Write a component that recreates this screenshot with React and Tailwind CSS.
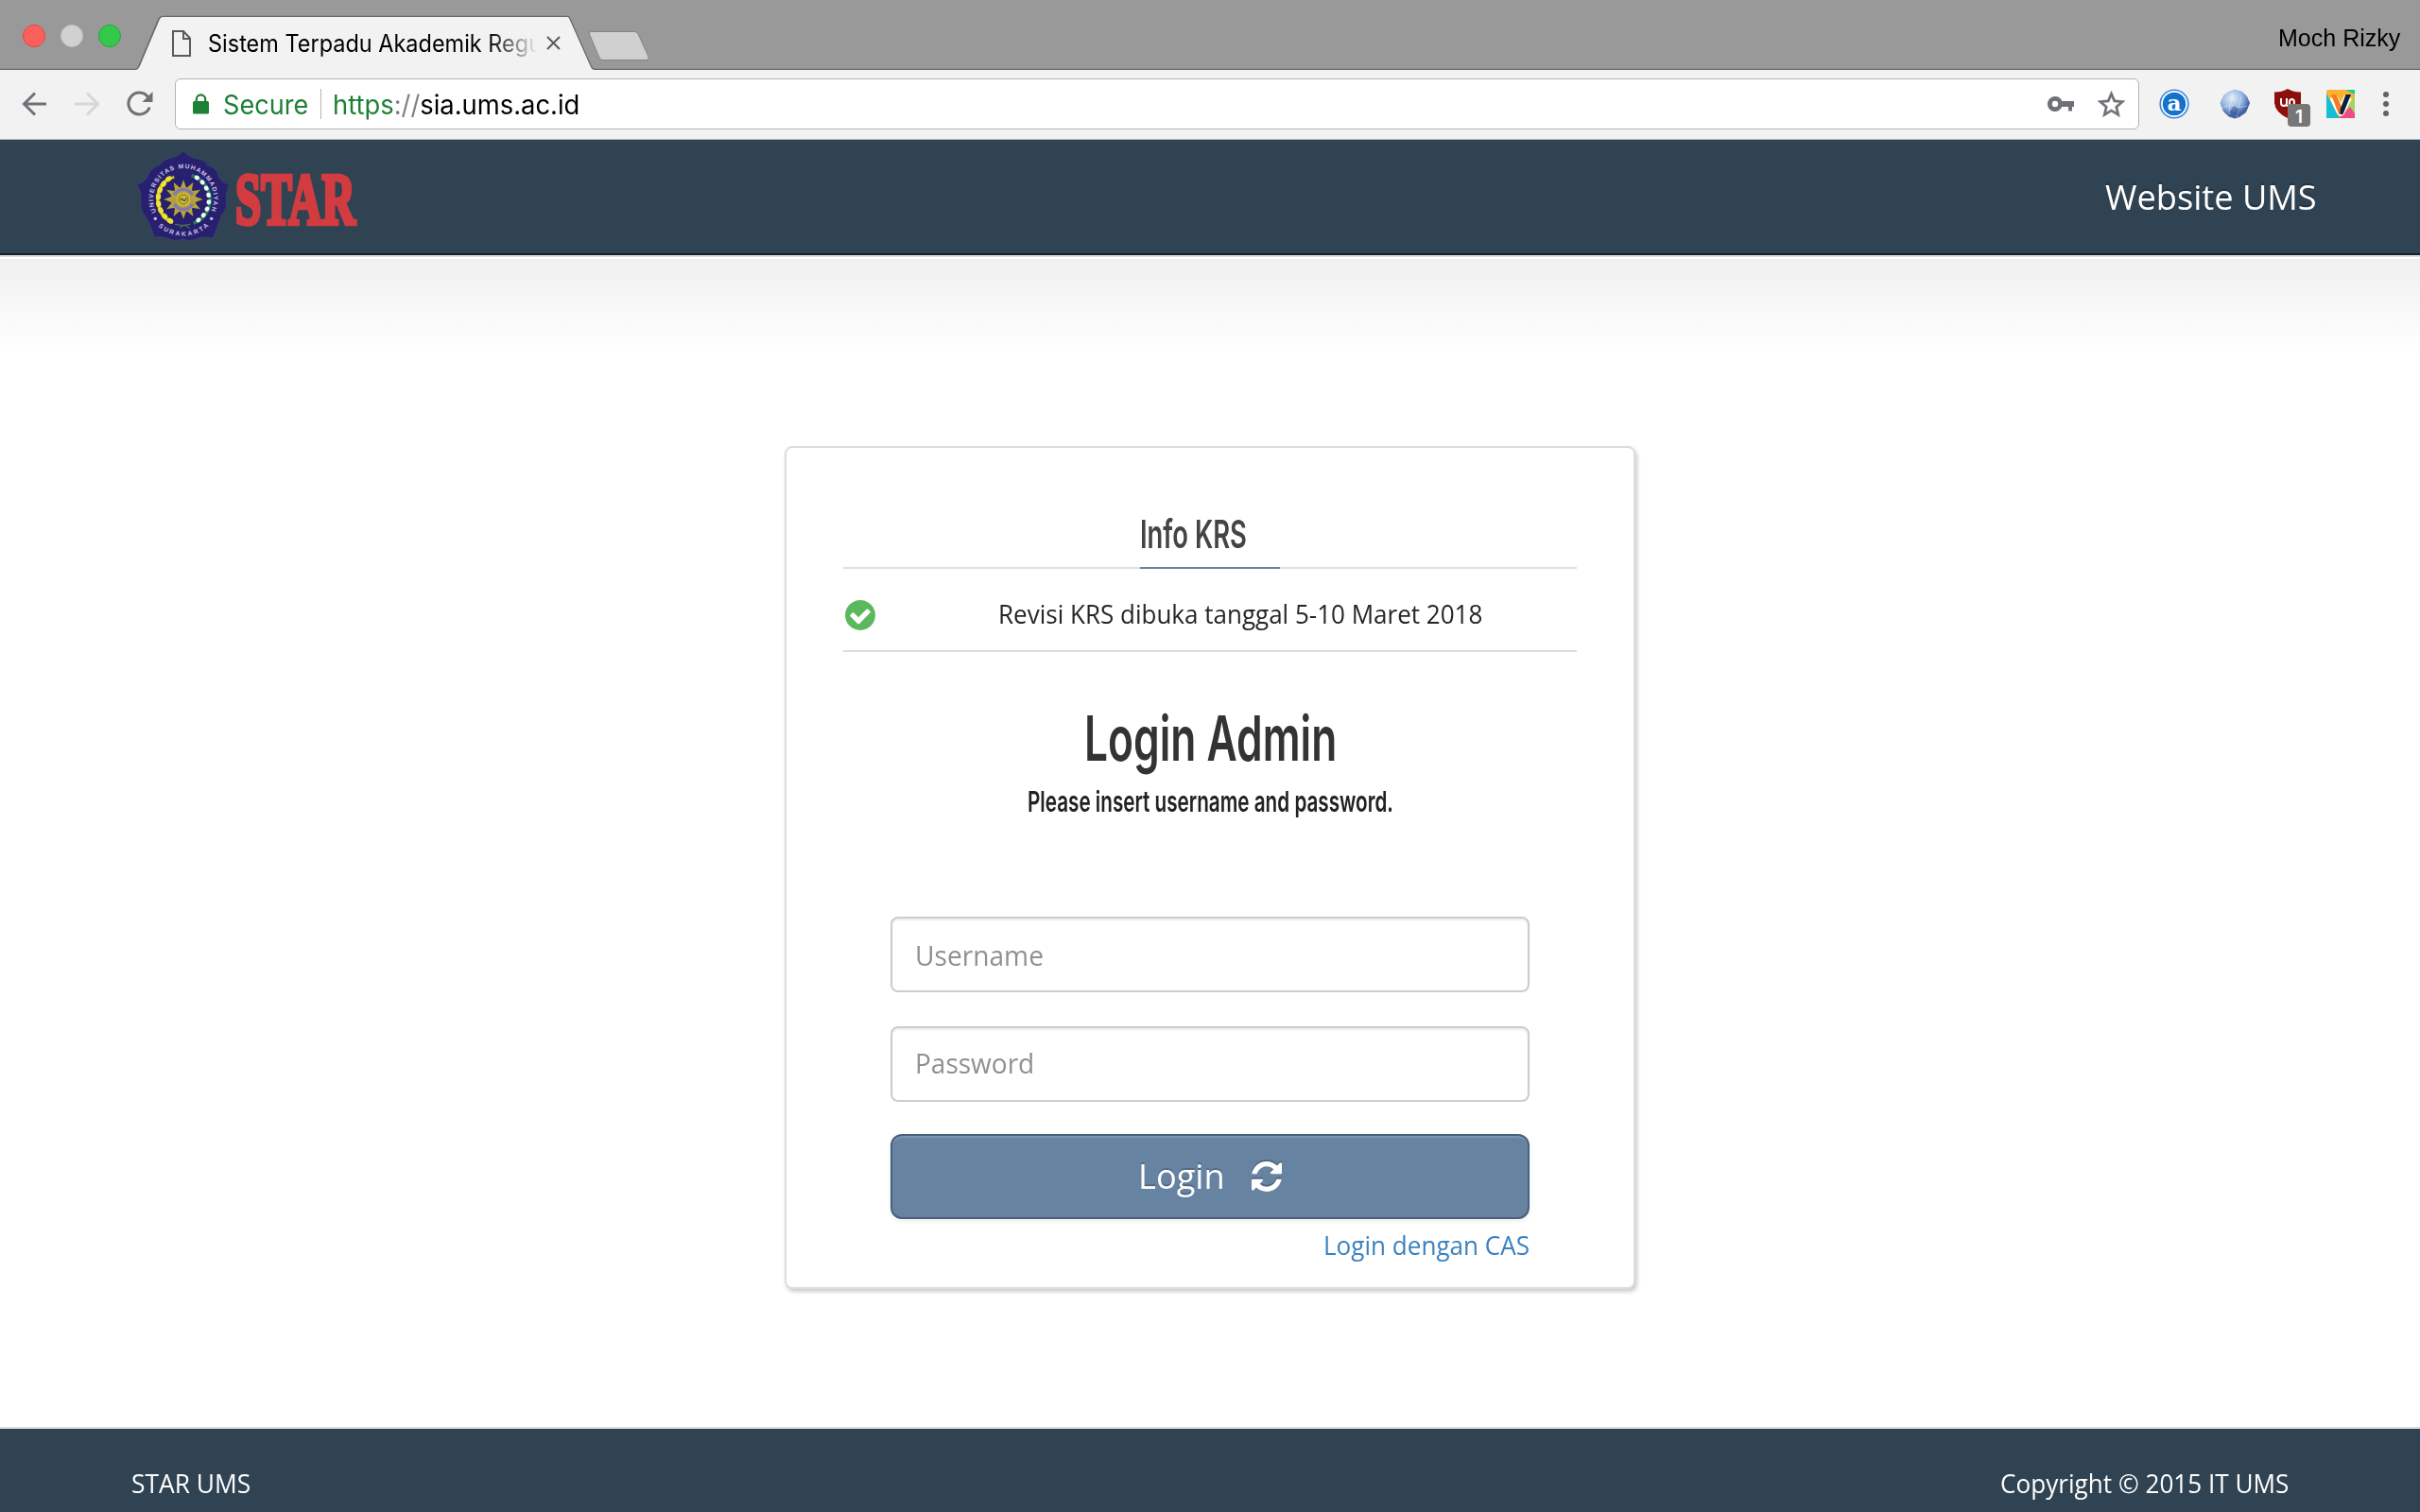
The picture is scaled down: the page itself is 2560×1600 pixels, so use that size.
import { useLayoutEffect, useRef, useState } from "react";

const OPEN = "font-['Open_Sans',sans-serif]";
const INTER = "font-['Inter',sans-serif]";

/* One line of text, condensed or widened to a given width. */
function Fit({ width, className = "", children }) {
  const ref = useRef(null);
  const [scale, setScale] = useState(1);
  useLayoutEffect(() => {
    setScale(width / ref.current.offsetWidth);
  }, [width]);
  return (
    <span className="block shrink-0" style={{ width }}>
      <span
        ref={ref}
        className={`inline-block origin-left whitespace-nowrap ${className}`}
        style={{ transform: `scaleX(${scale})` }}
      >
        {children}
      </span>
    </span>
  );
}

function TitleBar() {
  return (
    <div className="relative flex h-[74px] items-start bg-[#999999]">
      <svg className="absolute inset-0 h-[74px] w-full" viewBox="0 0 2560 74">
        <path d="M0 73.500H144Q146 73 147 70L168 20Q169.500 17.500 172 17.500H600Q602 17.500 603 20L625 70Q626 73 629 73.500H2560" fill="none" stroke="#686868" strokeWidth="1.500" />
        <path d="M144 74Q146.500 73.500 148 70L169 20.500Q170 18 172 18H600Q602 18 602.500 20.500L624.500 70Q626 74 629 74Z" fill="#f2f2f2" />
        <path d="M625 33.500H671Q674 33.500 675 36L686 60Q687 63.500 684 63.500H638Q635 63.500 634 61L623.500 36Q622.500 33.500 625 33.500Z" fill="#d0d0d0" stroke="#858585" />
      </svg>
      <div className="relative ml-6 mt-[26px] flex gap-4">
        <i className="size-6 rounded-full border border-[#e2463f] bg-[#fc605b]" />
        <i className="size-6 rounded-full border border-[#c0c0c0] bg-[#d1d1d1]" />
        <i className="size-6 rounded-full border border-[#24a935] bg-[#34c84a]" />
      </div>
      <div className="relative ml-[54px] mt-[25px] flex h-[41px] items-center">
        <svg className="h-[28px] w-5" viewBox="0 0 20 28" fill="none" stroke="#5a5a5a" strokeWidth="2">
          <path d="M1 1H12L19 8.500V27H1ZM12 1V9H19" />
        </svg>
        <div className="ml-[18px] [mask-image:linear-gradient(to_right,black_84%,transparent_99%)]">
          <Fit width={353} className={`${INTER} text-[25px] leading-[40px] text-black`}>Sistem Terpadu Akademik Regu</Fit>
        </div>
        <svg className="ml-[5px] size-[15px]" viewBox="0 0 15 15" stroke="#5a5a5a" strokeWidth="2">
          <path d="M1 1L14 14M14 1L1 14" />
        </svg>
      </div>
      <div className="relative ml-auto mr-[21px] mt-[20px]">
        <Fit width={129} className="font-['Liberation_Sans',sans-serif] text-[26px] leading-[40px] text-black">Moch Rizky</Fit>
      </div>
    </div>
  );
}

function Toolbar() {
  return (
    <div className="flex h-[74px] border-b border-[#b4b4b4] bg-[#f2f2f2] pt-[9px]">
      <div className="flex h-[54px] items-center pl-[23px]">
        <svg className="h-[26px] w-[27px]" viewBox="0 0 27 26" fill="none" stroke="#6e7175" strokeWidth="3">
          <path d="M26 13H3M14 1.500L2.500 13L14 24.500" />
        </svg>
        <svg className="ml-[29px] h-[26px] w-[27px]" viewBox="0 0 27 26" fill="none" stroke="#d6d6d6" strokeWidth="3">
          <path d="M0 13H24M13 1.500L24.500 13L13 24.500" />
        </svg>
        <svg className="ml-[28px] h-[28px] w-[28px]" viewBox="0 0 28 28" fill="none" stroke="#6e7175" strokeWidth="3">
          <path d="M24.200 17.500A11.500 11.500 0 1 1 22.500 6.500" />
          <path d="M27.500 1V12H16.500Z" fill="#6e7175" stroke="none" />
        </svg>
      </div>
      <div className="ml-[23px] flex h-[54px] w-[2078px] items-center rounded-[6px] border border-[#b4b4b4] bg-white pl-[18px] pr-[14px]">
        <svg className="h-[22px] w-[17px]" viewBox="0 0 17 22">
          <path d="M3.800 9V6A4.700 4.700 0 0 1 13.200 6V9" fill="none" stroke="#1e7e34" strokeWidth="2.200" />
          <rect y="8" width="17" height="13.500" rx="1.500" fill="#1e8037" />
        </svg>
        <div className="ml-[15px] flex items-center pt-[2px]">
          <Fit width={90} className={`${INTER} text-[28px] leading-[40px] text-[#1e8037]`}>Secure</Fit>
        </div>
        <i className="ml-[13px] h-8 w-px bg-[#b5b5b5]" />
        <div className="ml-[12px] flex pt-[2px]">
          <Fit width={261} className={`${INTER} text-[28px] leading-[40px] text-black`}>
            <span className="text-[#1e8037]">https</span>
            <span className="text-[#808080]">://</span>
            sia.ums.ac.id
          </Fit>
        </div>
        <svg className="ml-auto h-[16px] w-[28px]" viewBox="0 0 28 16" fill="#6e7175">
          <path fillRule="evenodd" d="M8 0A8 8 0 1 0 15.300 11H22V15.500H26V11H28V5H15.300A8 8 0 0 0 8 0ZM8 4.800A3.200 3.200 0 1 1 8 11.200A3.200 3.200 0 1 1 8 4.800Z" />
        </svg>
        <svg className="ml-[25px] h-[28px] w-[29px]" viewBox="2 2 20 19" fill="#6e7175" stroke="#6e7175" strokeWidth=".3">
          <path d="M22 9.240l-7.190-.62L12 2 9.190 8.630 2 9.240l5.460 4.730L5.820 21 12 17.270 18.180 21l-1.630-7.030L22 9.240zM12 15.400l-3.760 2.270 1-4.280-3.320-2.880 4.380-.38L12 6.100l1.710 4.040 4.380.38-3.320 2.880 1 4.280L12 15.400z" />
        </svg>
      </div>
      <div className="flex h-[54px] items-center pl-[21px]">
        <svg className="size-8" viewBox="0 0 32 32">
          <circle cx="16" cy="16" r="14.800" fill="#fff" stroke="#3b88d4" strokeWidth="1.600" />
          <circle cx="16" cy="16" r="12.200" fill="#1272cc" />
          <text x="16" y="23" textAnchor="middle" className="font-['DejaVu_Serif',serif] text-[23px] font-bold" fill="#fff">a</text>
        </svg>
        <svg className="ml-8 size-8" viewBox="0 0 32 32">
          <defs>
            <radialGradient id="globe" cx=".4" cy=".3" r=".75">
              <stop offset="0" stopColor="#e4effa" />
              <stop offset=".5" stopColor="#93b3dc" />
              <stop offset=".8" stopColor="#3c5fa3" />
              <stop offset="1" stopColor="#5f7199" />
            </radialGradient>
          </defs>
          <path d="M16 .5L24 3L29 8L32 15L28 25L21 30L16 31.500L10 29.500L4 24L.5 15L4 7L9 3Z" fill="url(#globe)" />
          <path d="M3 20L11 17L20 20L29 18M11 17L14 5M20 20L23 8M11 17L10 27M20 20L18 30" fill="none" stroke="#e8f1ff" strokeOpacity=".45" />
          <path d="M15 18L21 21L18 28L10 25Z" fill="#1f3f8a" fillOpacity=".45" />
        </svg>
        <div className="relative ml-[26px] h-[32px] w-[28px]">
          <svg className="h-[31px] w-[28px]" viewBox="0 0 28 31">
            <path d="M14 0Q20 3.500 28 3.500V15Q27 25 14 31Q1 25 0 15V3.500Q8 3.500 14 0Z" fill="#8d0f0b" />
            <path d="M7 10V15Q7 18 10 18Q13 18 13 15V10M13 18H14.500M16 22V13.500Q16 11 18.500 11Q21 11 21 14.500T18 18" fill="none" stroke="#fff" strokeWidth="2" />
          </svg>
          <span className="absolute left-[14px] top-[16px] flex h-6 w-6 items-center justify-center rounded-[4px] bg-[#777] pt-[2px] font-['Inter',sans-serif] text-[19px] font-semibold leading-none text-white">1</span>
        </div>
        <svg className="ml-[27px] size-[30px]" viewBox="0 0 30 30">
          <rect width="30" height="30" rx="2" fill="#fdb12b" />
          <path d="M0 4L14 30H0Z" fill="#15bfd0" />
          <path d="M20 0H30V5Z" fill="#12cfa0" />
          <path d="M30 5V23L20 20Z" fill="#a5d55f" />
          <path d="M13 30L25 18L30 25V30Z" fill="#ee4c86" />
          <path d="M7.500 7.500L15 23.500L23 7.500" fill="none" stroke="#fff" strokeWidth="8.500" strokeLinejoin="round" />
          <path d="M5 5H10.500L16 18V26H13Z" fill="#f77b22" />
          <path d="M20.500 5H26L17.500 26H14.500V21Z" fill="#0d2038" />
        </svg>
        <svg className="ml-[30px] h-[26px] w-[6px]" viewBox="0 0 6 26" fill="#5f6368">
          <circle cx="3" cy="3" r="3" />
          <circle cx="3" cy="13" r="3" />
          <circle cx="3" cy="23" r="3" />
        </svg>
      </div>
    </div>
  );
}

const RAYS = Array.from({ length: 12 }, (_, i) => i * 30);
const BEADS = [-58, -42, -26, -10, 6, 22, 38, 54];

function Logo() {
  return (
    <svg className="mb-[7px] h-[104px] w-[240px]" viewBox="30 36 720 312">
      <defs>
        <path id="ringTop" d="M106 250A96 96 0 1 1 278 250" />
        <path id="ringBottom" d="M105 288A118 118 0 0 0 279 288" />
      </defs>
      <path d="M192 55Q205 75 232 80Q262 85 268 102Q300 110 305 140Q315 158 338 163Q325 185 328 215Q332 240 312 262Q300 300 285 333Q255 325 235 335Q210 345 192 335Q170 345 145 335Q125 325 100 330Q92 300 72 265Q52 240 58 212Q60 185 45 163Q70 158 80 135Q90 108 118 100Q130 82 155 78Q182 72 192 55Z" fill="#28206f" stroke="#3d3f78" strokeWidth="2" />
      <g className="font-['Liberation_Sans',sans-serif] text-[20px] font-bold" fill="#c9c5e6">
        <text><textPath href="#ringTop" textLength="384" lengthAdjust="spacing">UNIVERSITAS MUHAMMADIYAH</textPath></text>
        <text><textPath href="#ringBottom" startOffset="10" textLength="176" lengthAdjust="spacing">SURAKARTA</textPath></text>
      </g>
      <circle cx="103" cy="271" r="5" fill="#c9c5e6" />
      <circle cx="281" cy="271" r="5" fill="#c9c5e6" />
      <path d="M163 139Q112 152 109 206Q111 265 158 284" fill="none" stroke="#c9b52c" strokeWidth="8" />
      <path d="M218 134Q272 152 278 210Q272 268 224 286" fill="none" stroke="#1d7f57" strokeWidth="10" />
      {BEADS.map((a) => (
        <g key={a}>
          <ellipse cx="112" cy="210" rx="8" ry="11" fill="#ede431" transform={`rotate(${a} 192 210)`} />
          <ellipse cx="273" cy="210" rx="7" ry="8" fill="#f2f7f5" transform={`rotate(${a} 192 210)`} />
        </g>
      ))}
      <path d="M165 289Q190 297 214 289M180 300L194 291L212 301" fill="none" stroke="#4c8a3f" strokeWidth="3" />
      {RAYS.map((a) => (
        <path key={a} d="M192 148L203 178H181Z" fill="#b9a635" transform={`rotate(${a} 192 210)`} />
      ))}
      <circle cx="192" cy="210" r="40" fill="#b3a040" />
      <circle cx="192" cy="210" r="32" fill="none" stroke="#8279b4" strokeWidth="10" strokeDasharray="70 30" strokeDashoffset="-15" />
      <circle cx="192" cy="210" r="22" fill="#d0bd32" />
      <circle cx="192" cy="210" r="15" fill="none" stroke="#6f6435" strokeWidth="3" />
      <path d="M183 213Q187 202 192 213Q197 219 201 205" fill="none" stroke="#51493c" strokeWidth="4" />
      <text transform="translate(357 289) scale(.57 1)" x="0" y="0" textLength="668" lengthAdjust="spacingAndGlyphs" className="font-['Liberation_Serif',serif] text-[232px] font-bold" fill="#d23c40" stroke="#d23c40" strokeWidth="14">STAR</text>
    </svg>
  );
}

function Field({ label, width, lift }) {
  return (
    <div className={`flex h-20 items-center rounded-[8px] border-2 border-[#cccccc] bg-white pl-[24px] shadow-[inset_0_2px_2px_rgba(0,0,0,0.075)] ${lift}`}>
      <Fit width={width} className={`${OPEN} text-[30px] leading-[40px] text-[#909090]`}>{label}</Fit>
    </div>
  );
}

function LoginCard() {
  return (
    <section className="h-[892px] w-[900px] rounded-[8px] border-2 border-[#dddddd] bg-white px-[60px] pt-[66px] shadow-[2px_3px_4px_rgba(0,0,0,0.2)]">
      <h2 className="flex h-[62px] justify-center border-b-2 border-[#dfdfdf]">
        <span className="h-[62px] w-[148px] border-b-2 border-[#6783a2]">
          <Fit width={113} className={`${INTER} text-[41px] font-semibold leading-[50px] text-[#444444]`}>Info KRS</Fit>
        </span>
      </h2>
      <div className="flex h-[88px] items-center border-b-2 border-[#dddddd] pt-[8px]">
        <svg className="ml-[2px] mt-[4px] size-8" viewBox="128 128 1536 1536" fill="#5cb85c">
          <path d="M1412 734q0-28-18-46l-91-90q-19-19-45-19t-45 19l-408 407-226-226q-19-19-45-19t-45 19l-91 90q-18 18-18 46 0 27 18 45l362 362q19 19 45 19 27 0 46-19l543-543q18-18 18-45zm252 162q0 209-103 385.500t-279.500 279.500-385.500 103-385.500-103-279.500-279.500-103-385.500 103-385.500 279.500-279.500 385.500-103 385.500 103 279.500 279.500 103 385.500z" />
        </svg>
        <div className="ml-[130px]">
          <Fit width={512} className={`${OPEN} text-[28px] leading-[40px] text-[#262626]`}>Revisi KRS dibuka tanggal 5-10 Maret 2018</Fit>
        </div>
      </div>
      <h1 className="mt-[51px] flex justify-center">
        <Fit width={267} className={`${INTER} text-[66px] font-semibold leading-[80px] text-[#333333]`}>Login Admin</Fit>
      </h1>
      <h3 className="mt-[7px] flex justify-center">
        <Fit width={387} className={`${INTER} text-[30.5px] font-semibold leading-[40px] text-[#222222]`}>Please insert username and password.</Fit>
      </h3>
      <form className="mt-[102px] px-[50px]">
        <Field label="Username" width={136} lift="pt-[1px]" />
        <Field label="Password" width={126} lift="mt-9 pb-[3px]" />
        <button type="button" className="mt-[34px] flex h-[90px] w-full items-center rounded-[12px] border-2 border-[#48617b] bg-[#6783a2] pl-[260px] shadow-[inset_0_2px_0_rgba(255,255,255,0.15),0_2px_4px_rgba(0,0,0,0.08)]">
          <Fit width={92} className={`${OPEN} -mt-0.5 text-left text-[37px] font-medium leading-[50px] text-white [text-shadow:0_-2px_0_rgba(0,0,0,0.2)]`}>Login</Fit>
          <svg className="ml-[28px] size-8 drop-shadow-[0_-2px_0_rgba(0,0,0,0.2)]" viewBox="128 128 1536 1536" fill="#ffffff">
            <path d="M1639 1056q0 5-1 7-64 268-268 434.500t-478 166.500q-146 0-282.500-55t-243.500-157l-129 129q-19 19-45 19t-45-19-19-45v-448q0-26 19-45t45-19h448q26 0 45 19t19 45-19 45l-137 137q71 66 161 102t187 36q134 0 250-65t186-179q11-17 53-117 8-23 30-23h192q13 0 22.500 9.500t9.500 22.500zm25-800v448q0 26-19 45t-45 19h-448q-26 0-45-19t-19-45 19-45l138-138q-148-137-349-137-134 0-250 65t-186 179q-11 17-53 117-8 23-30 23h-199q-13 0-22.500-9.500t-9.500-22.500v-7q65-268 270-434.500t480-166.500q146 0 284 55.500t245 156.500l130-129q19-19 45-19t45 19 19 45z" />
          </svg>
        </button>
        <div className="mt-[7px] flex justify-end">
          <Fit width={218} className={`${OPEN} text-[28px] leading-[40px] text-[#3a82c0]`}>Login dengan CAS</Fit>
        </div>
      </form>
    </section>
  );
}

export default function App() {
  return (
    <div className="flex h-[1600px] w-[2560px] flex-col overflow-hidden bg-white">
      <TitleBar />
      <Toolbar />
      <header className="flex h-[122px] shrink-0 items-center justify-between border-b-2 border-[#17202a] bg-[#304352] pl-[140px] pr-[109px]">
        <Logo />
        <Fit width={224} className={`${OPEN} text-[37px] font-medium leading-[50px] text-white [text-shadow:0_-2px_0_rgba(0,0,0,0.25)]`}>Website UMS</Fit>
      </header>
      <div className="h-[2px] shrink-0 bg-[#dddddd]" />
      <main className="mt-[2px] flex h-[1236px] shrink-0 justify-center bg-[linear-gradient(to_bottom,#f0f0f0_0px,#ffffff_100px)] pt-[198px]">
        <LoginCard />
      </main>
      <footer className="flex h-[90px] shrink-0 items-start justify-between border-t-2 border-[#d8dcdc] bg-[#304352] pl-[139px] pr-[139px] pt-[38px]">
        <Fit width={126} className={`${OPEN} text-[27px] font-medium leading-[40px] text-white`}>STAR UMS</Fit>
        <Fit width={305} className={`${OPEN} text-[27px] font-medium leading-[40px] text-white`}>Copyright © 2015 IT UMS</Fit>
      </footer>
    </div>
  );
}
